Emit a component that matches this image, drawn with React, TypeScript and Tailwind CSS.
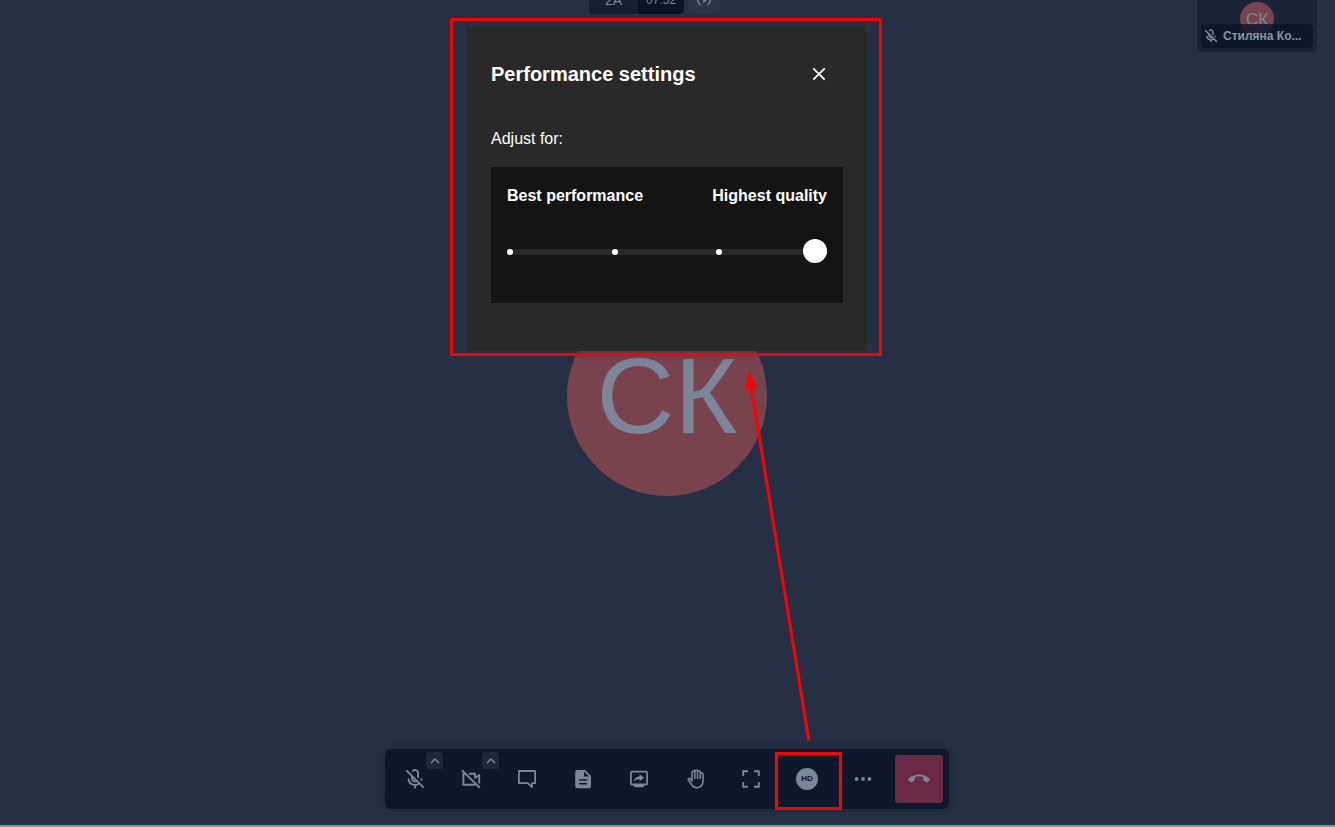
import React, { useState } from "react";
import { MdCallEnd } from "react-icons/md";

function MicOffIcon({ className }: { className: string }) {
  return (
    <svg viewBox="0 0 24 24" className={className} fill="none" stroke="currentColor" strokeWidth="1.900">
      <path d="M9 9v2.500a3 3 0 0 0 5 2.200M15 11V6a3 3 0 0 0-5.600-1.500" />
      <path d="M5.500 11.500a6.500 6.500 0 0 0 11 4.600M18.500 11.500c0 .8-.1 1.400-.4 2.200M12 18v3.500" />
      <path d="M3.300 3.300l17.400 17.400" />
    </svg>
  );
}

function CameraOffIcon() {
  return (
    <svg viewBox="0 0 24 24" className="size-6" fill="none" stroke="currentColor" strokeWidth="1.900">
      <path d="M6.500 6.800H4.400v11h11.400v-1.500M10 6.800h6v4.800" />
      <path d="M16 11l4.200-3v8.500" strokeLinejoin="round" />
      <path d="M3 3.300l17.800 17.400" />
    </svg>
  );
}

function ChatIcon() {
  return (
    <svg viewBox="0 0 24 24" className="size-6" fill="none" stroke="currentColor" strokeWidth="1.800" strokeLinejoin="round">
      <path d="M3.900 4h16.200v12.200H17v4l-4.200-4H3.900z" />
    </svg>
  );
}

function DocumentIcon() {
  return (
    <svg viewBox="0 0 24 24" className="size-6" fill="currentColor" fillRule="evenodd">
      <path d="M6.200 3h8L20 9v10.200a2 2 0 0 1-2 2H6.200a2 2 0 0 1-2-2V5a2 2 0 0 1 2-2zM13 4.600V9.600h5.200zM8.200 12.300v1.500h7.800v-1.500zM8.200 16v1.500h7.800V16z" />
    </svg>
  );
}

function ShareScreenIcon() {
  return (
    <svg viewBox="0 0 24 24" className="size-6" fill="currentColor">
      <rect x="3.900" y="4.700" width="16.200" height="12.800" rx="1" fill="none" stroke="currentColor" strokeWidth="1.800" />
      <path d="M7 18h10v1.200a1 1 0 0 1-1 1H8a1 1 0 0 1-1-1z" />
      <path d="M12.600 7.300l4.600 3.500-4.600 3.500v-2c-2.400 0-4.300.5-5.900 2.400.5-3.200 2.500-5.100 5.900-5.500z" />
    </svg>
  );
}

function HandIcon() {
  return (
    <svg viewBox="0 0 24 24" className="size-6" fill="none" stroke="currentColor" strokeWidth="1.600" strokeLinecap="round" strokeLinejoin="round">
      <path d="M9 14.200V5.500a1.400 1.400 0 0 1 2.800 0V11.500M11.800 5.500V4.300a1.350 1.350 0 0 1 2.700 0V11.500M14.500 5.200a1.400 1.400 0 0 1 2.800 0V11.500M17.300 7.200a1.350 1.350 0 0 1 2.700 0v7.300a6.200 6.200 0 0 1-6.200 6.200c-2.600 0-4.200-1.200-5.400-3.400L5.300 13c-.6-1.200.9-2.100 1.800-1.200L9 14" />
    </svg>
  );
}

function FullscreenIcon() {
  return (
    <svg viewBox="0 0 24 24" className="size-6" fill="none" stroke="currentColor" strokeWidth="1.900">
      <path d="M4.200 9V4.300H9M15 4.300h4.800V9M19.800 15v4.800H15M9 19.800H4.200V15" />
    </svg>
  );
}

function DotsIcon() {
  return (
    <svg viewBox="0 0 24 24" className="size-6" fill="currentColor">
      <circle cx="5.600" cy="12" r="1.900" />
      <circle cx="12" cy="12" r="1.900" />
      <circle cx="18.400" cy="12" r="1.900" />
    </svg>
  );
}

function GaugeIcon() {
  return (
    <svg viewBox="0 0 16 16" className="size-4" fill="none" stroke="currentColor" strokeWidth="1.500">
      <path d="M4.500 12.800a6.500 6.500 0 1 1 7 0" />
      <path d="M7.800 9.500l2.200-2.500" strokeWidth="2" strokeLinecap="round" />
    </svg>
  );
}

function ChevronButton({ label }: { label: string }) {
  return (
    <button
      aria-label={label}
      className="absolute -top-[3px] left-[35px] flex size-[17px] items-center justify-center rounded-[3px] bg-[#1e293c]"
    >
      <svg viewBox="0 0 10 10" className="size-2.5" fill="none" stroke="currentColor" strokeWidth="1.500">
        <path d="M1 7l4-4 4 4" />
      </svg>
    </button>
  );
}

function ToolButton({ label, children }: { label: string; children: React.ReactNode }) {
  return (
    <button aria-label={label} className="flex size-12 items-center justify-center rounded">
      {children}
    </button>
  );
}

function Toolbar() {
  return (
    <nav
      aria-label="Meeting controls"
      className="flex gap-2 rounded-md bg-[#0e182b] p-1.5 text-[#7b869b] shadow-[0_0_10px_rgba(14,24,43,0.45)]"
    >
      <div className="relative">
        <ToolButton label="Unmute microphone"><MicOffIcon className="size-6" /></ToolButton>
        <ChevronButton label="Audio settings" />
      </div>
      <div className="relative">
        <ToolButton label="Start camera"><CameraOffIcon /></ToolButton>
        <ChevronButton label="Video settings" />
      </div>
      <ToolButton label="Chat"><ChatIcon /></ToolButton>
      <ToolButton label="Shared document"><DocumentIcon /></ToolButton>
      <ToolButton label="Share screen"><ShareScreenIcon /></ToolButton>
      <ToolButton label="Raise hand"><HandIcon /></ToolButton>
      <ToolButton label="Full screen"><FullscreenIcon /></ToolButton>
      <div className="relative">
        <ToolButton label="Performance settings">
          <span className="flex size-[22px] items-center justify-center rounded-full bg-current">
            <span className="text-[8px] leading-none font-bold text-[#0e182b]">HD</span>
          </span>
        </ToolButton>
        <div className="pointer-events-none absolute -top-[3px] -right-[11px] -bottom-[7px] -left-2 border-[3px] border-[#ff0000]" />
      </div>
      <ToolButton label="More actions"><DotsIcon /></ToolButton>
      <button aria-label="Leave the meeting" className="flex size-12 items-center justify-center rounded-[3px] bg-[#6a2945]">
        <MdCallEnd className="size-[22px]" />
      </button>
    </nav>
  );
}

function PerformanceDialog() {
  const [quality, setQuality] = useState(3);
  return (
    <section
      role="dialog"
      aria-labelledby="dialog-title"
      className="relative w-[400px] bg-[#292929] px-6 pt-8 pb-12 text-white shadow-[0_0_10px_rgba(37,52,82,1)]"
    >
      <header className="flex h-8 items-center justify-between pr-4">
        <h1 id="dialog-title" className="text-xl font-bold">Performance settings</h1>
        <button aria-label="Close" className="flex size-4 items-center justify-center">
          <svg viewBox="0 0 16 16" className="size-4" fill="none" stroke="currentColor" strokeWidth="1.800">
            <path d="M2.300 2.300l11.400 11.400M13.700 2.300L2.300 13.700" />
          </svg>
        </button>
      </header>
      <p className="mt-[37px] text-base leading-6">Adjust for:</p>
      <div className="mt-4 h-[136px] bg-[#141414] px-4 pt-[17px]">
        <label htmlFor="quality" className="flex justify-between text-base leading-6 font-bold">
          <span>Best performance</span>
          <span>Highest quality</span>
        </label>
        <div className="relative mt-[31px] flex h-6 items-end pb-2">
          <div className="flex h-1.5 w-full justify-between bg-[#292929]">
            <span className="size-1.5 rounded-full bg-white" />
            <span className="size-1.5 rounded-full bg-white" />
            <span className="size-1.5 rounded-full bg-white" />
            <span className="size-1.5 rounded-full bg-white" />
          </div>
          <input
            id="quality"
            type="range"
            min={0}
            max={3}
            step={1}
            value={quality}
            onChange={(e) => setQuality(Number(e.target.value))}
            className="absolute inset-0 h-6 w-full appearance-none bg-transparent [&::-webkit-slider-thumb]:size-6 [&::-webkit-slider-thumb]:appearance-none [&::-webkit-slider-thumb]:rounded-full [&::-webkit-slider-thumb]:bg-white"
          />
        </div>
      </div>
      <div className="pointer-events-none absolute -top-2 -right-[15px] -bottom-[5px] -left-[17px] border-[3px] border-[#ff0000]" />
      <svg
        viewBox="0 0 80 380"
        className="pointer-events-none absolute top-[339px] left-[273px] h-[380px] w-20"
        aria-hidden="true"
      >
        <path d="M11 21L69 376" stroke="#ff0000" strokeWidth="3" />
        <path d="M9 6L17.500 22.500 5.500 24.500z" fill="#ff0000" />
      </svg>
    </section>
  );
}

export default function App() {
  return (
    <div
      className="relative flex min-h-screen flex-col items-center overflow-hidden border-b-2 border-[#34c08c] bg-[#263045] pr-px"
      style={{ fontFamily: '"Liberation Sans", Arial, sans-serif' }}
    >
      <header className="-mt-3.5 flex h-7 pr-[25px] text-[#7b869b]">
        <div className="flex items-center rounded-l bg-[#161f34] px-4 text-sm leading-7">2A</div>
        <div className="flex items-center rounded-r bg-[#0b152a] px-2 text-xs leading-7">07:52</div>
        <div className="ml-1 flex w-8 items-center justify-center rounded bg-[#2c364b]">
          <GaugeIcon />
        </div>
      </header>

      <aside className="absolute top-0 right-[18px] h-[52px] w-[120px] rounded-b bg-[#1a2439] pt-0.5">
        <div className="mx-auto flex size-[34px] items-center justify-center rounded-full bg-[#79434d] text-[17px] leading-none text-[#7b869b]">
          СК
        </div>
        <div className="absolute inset-x-1 bottom-1 flex h-6 items-center gap-1 rounded bg-[#0b152a]/80 px-0.5 text-[#8b95a7]">
          <MicOffIcon className="size-4 shrink-0" />
          <span className="text-xs leading-6 font-bold whitespace-nowrap">Стиляна Ко...</span>
        </div>
      </aside>

      <main className="flex flex-1 flex-col items-center justify-center pb-12">
        <div className="flex size-[200px] items-center justify-center rounded-full bg-[#79434d] text-[108px] leading-none text-[#7b869b]">
          СК
        </div>
      </main>

      <footer className="absolute inset-x-0 bottom-4 flex justify-center pr-px">
        <Toolbar />
      </footer>

      <div className="absolute inset-x-0 top-[26px] flex justify-center pr-px">
        <PerformanceDialog />
      </div>
    </div>
  );
}
